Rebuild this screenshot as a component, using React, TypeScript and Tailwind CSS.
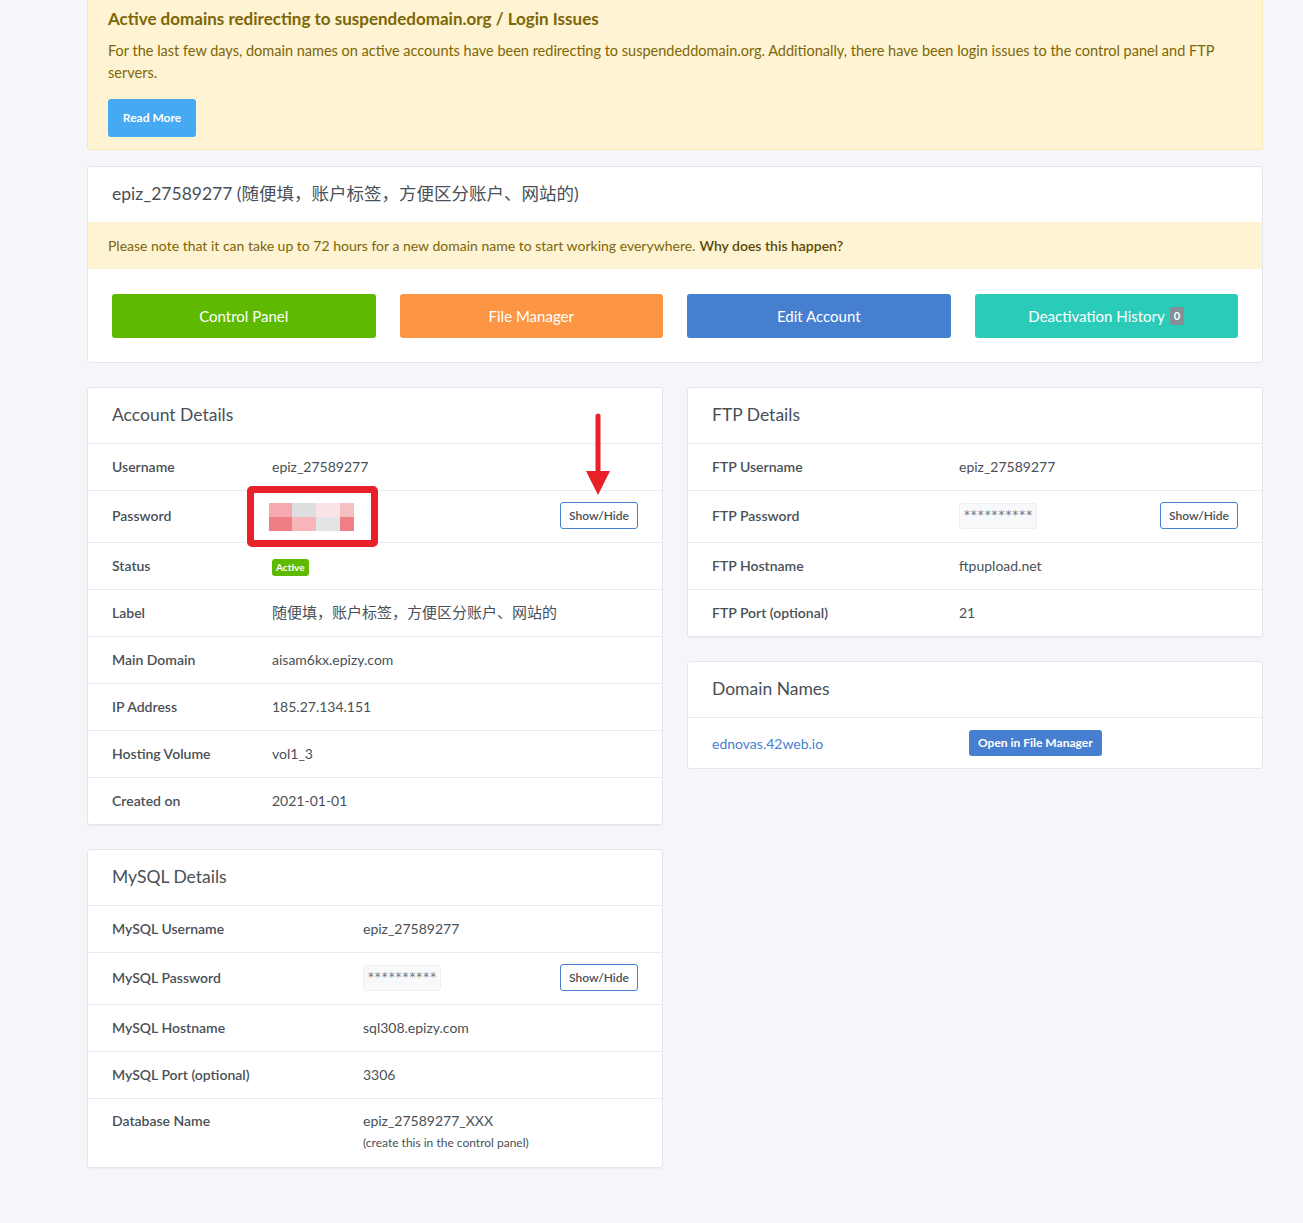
import React from "react";

type Row = {
  label: string;
  value?: React.ReactNode;
  action?: boolean;
  tall?: boolean;
};

const font = "font-['Lato','Noto_Sans_CJK_SC',sans-serif]";

function ShowHide() {
  return (
    <button className="h-[27px] w-[78px] rounded-[3px] border border-[#467fcf] bg-white text-[12px] font-semibold text-[#495057]">
      Show/Hide
    </button>
  );
}

function Masked() {
  return (
    <span className="inline-flex h-[26px] w-[78px] items-center justify-center rounded-[3px] border border-[#eceef1] bg-[#f8f9fa] font-['DejaVu_Sans_Mono',monospace] text-[11.5px] text-[#6e7687]">
      **********
    </span>
  );
}

function Card({
  title,
  rows,
  labelWidth,
  children,
}: {
  title: string;
  rows: Row[];
  labelWidth: string;
  children?: React.ReactNode;
}) {
  return (
    <div className="relative rounded-[3px] border border-[#e3e6ec] bg-white shadow-[0_1px_2px_rgba(0,0,0,0.04)]">
      <div className="flex h-[55px] items-center px-6 text-[17.5px] text-[#495057]">{title}</div>
      {rows.map((r) => (
        <div
          key={r.label}
          className={
            "flex border-t border-[#e9ecef] px-6 text-[14px] text-[#495057] " +
            (r.tall ? "items-start pt-[11px] h-[69px]" : r.action ? "items-center h-[52px] pb-[2px]" : "items-center h-[47px] pb-[2px]")
          }
        >
          <div className={labelWidth + " font-semibold shrink-0"}>{r.label}</div>
          <div className="flex-1">{r.value}</div>
          {r.action && <ShowHide />}
        </div>
      ))}
      {children}
    </div>
  );
}

function PixelBlur() {
  const cols = ["w-[23px]", "w-[24px]", "w-[24px]", "w-[14px]"];
  const top = ["bg-[#f6a9ae]", "bg-[#dcdee0]", "bg-[#fae3e6]", "bg-[#f5c0c3]"];
  const bottom = ["bg-[#f07d86]", "bg-[#f8b6ba]", "bg-[#e3e4e5]", "bg-[#ef7f85]"];
  return (
    <div className="relative ml-[-3px] mt-[2px]">
      <div className="flex flex-col">
        <div className="flex">
          {cols.map((w, i) => (
            <div key={i} className={w + " h-[14px] " + top[i]} />
          ))}
        </div>
        <div className="flex">
          {cols.map((w, i) => (
            <div key={i} className={w + " h-[14px] " + bottom[i]} />
          ))}
        </div>
      </div>
      {/* red highlight box */}
      <div className="absolute left-[-22px] top-[-17px] h-[61px] w-[131px] rounded-[5px] border-[7px] border-[#e8202a]" />
    </div>
  );
}

export default function App() {
  const accountRows: Row[] = [
    { label: "Username", value: "epiz_27589277" },
    { label: "Password", value: <PixelBlur />, action: true },
    {
      label: "Status",
      value: (
        <span className="inline-block rounded-[3px] bg-[#5eba00] px-[4px] py-[1px] text-[10px] font-bold leading-[15px] text-white">
          Active
        </span>
      ),
    },
    { label: "Label", value: <span className="text-[15px]">随便填，账户标签，方便区分账户、网站的</span> },
    { label: "Main Domain", value: "aisam6kx.epizy.com" },
    { label: "IP Address", value: "185.27.134.151" },
    { label: "Hosting Volume", value: "vol1_3" },
    { label: "Created on", value: "2021-01-01" },
  ];

  const mysqlRows: Row[] = [
    { label: "MySQL Username", value: "epiz_27589277" },
    { label: "MySQL Password", value: <Masked />, action: true },
    { label: "MySQL Hostname", value: "sql308.epizy.com" },
    { label: "MySQL Port (optional)", value: "3306" },
    {
      label: "Database Name",
      tall: true,
      value: (
        <div className="flex flex-col">
          <span>epiz_27589277_XXX</span>
          <span className="mt-[3px] text-[12px] text-[#495057]">(create this in the control panel)</span>
        </div>
      ),
    },
  ];

  const ftpRows: Row[] = [
    { label: "FTP Username", value: "epiz_27589277" },
    { label: "FTP Password", value: <Masked />, action: true },
    { label: "FTP Hostname", value: "ftpupload.net" },
    { label: "FTP Port (optional)", value: "21" },
  ];

  const buttons = [
    { text: "Control Panel", cls: "bg-[#5eba00]" },
    { text: "File Manager", cls: "bg-[#fd9644]" },
    { text: "Edit Account", cls: "bg-[#467fcf]" },
    { text: "Deactivation History", cls: "bg-[#2bcbba]", badge: "0" },
  ];

  return (
    <div className={"min-h-[1223px] bg-[#f5f5fa] pb-14 " + font}>
      <div className="ml-[87px] w-[1176px]">
        {/* announcement */}
        <div className="rounded-b-[3px] border border-t-0 border-[#f7e8b8] bg-[#fef3d2] px-5 pb-3 pt-[7px] text-[#7d6608]">
          <div className="text-[17px] font-bold leading-[24px]">
            Active domains redirecting to suspendedomain.org / Login Issues
          </div>
          <p className="mt-[9px] text-[14.5px] leading-[22px]">
            For the last few days, domain names on active accounts have been redirecting to suspendeddomain.org.
            Additionally, there have been login issues to the control panel and FTP servers.
          </p>
          <button className="mt-[15px] h-[38px] w-[88px] rounded-[3px] bg-[#45aaf2] text-[12px] font-bold text-white">
            Read More
          </button>
        </div>

        {/* account summary */}
        <div className="mt-4 rounded-[3px] border border-[#e3e6ec] bg-white">
          <div className="flex h-[55px] items-center px-6 text-[17.5px] text-[#495057]">
            epiz_27589277 (随便填，账户标签，方便区分账户、网站的)
          </div>
          <div className="flex h-[47px] items-center bg-[#fef3d2] px-5 text-[14px] text-[#7d6608]">
            Please note that it can take up to 72 hours for a new domain name to start working everywhere.
            <span className="ml-1 font-semibold text-[#5a4a06]">Why does this happen?</span>
          </div>
          <div className="grid grid-cols-4 gap-6 px-6 pb-6 pt-[25px]">
            {buttons.map((b) => (
              <button
                key={b.text}
                className={"flex h-[44px] items-center justify-center gap-[5px] rounded-[3px] text-[15px] text-white " + b.cls}
              >
                {b.text}
                {b.badge && (
                  <span className="rounded-[2px] bg-[#868e96] px-[4px] text-[11px] font-bold leading-[18px] text-white">
                    {b.badge}
                  </span>
                )}
              </button>
            ))}
          </div>
        </div>

        {/* details */}
        <div className="mt-6 grid grid-cols-2 items-start gap-6">
          <div className="flex flex-col gap-6">
            <Card title="Account Details" rows={accountRows} labelWidth="w-[160px]">
              <svg className="absolute left-[498px] top-[25px]" width="24" height="84" viewBox="0 0 24 84">
                <line x1="12" y1="3" x2="12" y2="62" stroke="#e8202a" strokeWidth="5" strokeLinecap="round" />
                <polygon points="0,58 24,58 12,82" fill="#e8202a" />
              </svg>
            </Card>
            <Card title="MySQL Details" rows={mysqlRows} labelWidth="w-[251px]" />
          </div>
          <div className="flex flex-col gap-6">
            <Card title="FTP Details" rows={ftpRows} labelWidth="w-[247px]" />
            <div className="rounded-[3px] border border-[#e3e6ec] bg-white">
              <div className="flex h-[55px] items-center px-6 text-[17.5px] text-[#495057]">Domain Names</div>
              <div className="flex h-[51px] items-center border-t border-[#e9ecef] px-6 text-[14px]">
                <div className="w-[257px] text-[#467fcf]">ednovas.42web.io</div>
                <button className="h-[26px] rounded-[3px] bg-[#467fcf] px-[9px] text-[12px] font-bold text-white">
                  Open in File Manager
                </button>
              </div>
            </div>
          </div>
        </div>
      </div>
    </div>
  );
}
